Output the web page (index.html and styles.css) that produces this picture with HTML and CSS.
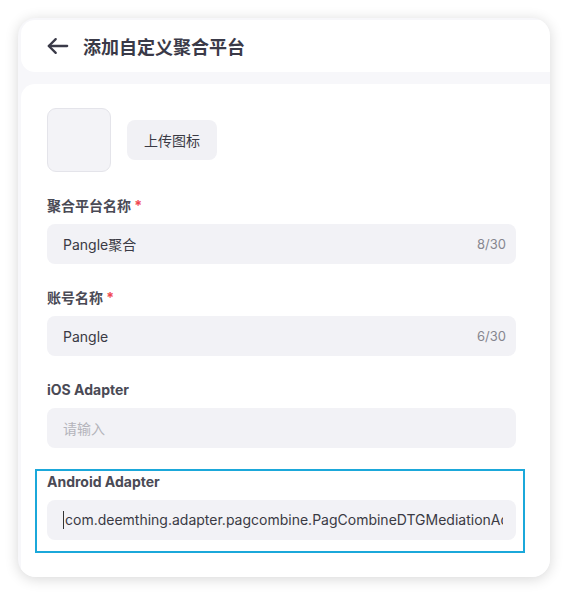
FILE: index.html
```html
<!DOCTYPE html>
<html lang="zh-CN">
<head>
    <meta charset="UTF-8">
    <meta name="viewport" content="width=device-width, initial-scale=1.0">
    <title>添加自定义聚合平台</title>
    <link rel="stylesheet" href="styles.css">
</head>
<body>
    <div class="card">
        <!-- Header -->
        <div class="header">
            <svg class="back" width="22" height="22" viewBox="0 0 24 24" fill="none" stroke="#3a3a48" stroke-width="2.5" stroke-linecap="round" stroke-linejoin="round">
                <path d="M22 12H2"/>
                <path d="M9.5 4.5L2 12l7.5 7.5"/>
            </svg>
            <h1>添加自定义聚合平台</h1>
        </div>

        <!-- Form -->
        <div class="form">
            <div class="upload-row">
                <div class="icon-box"></div>
                <button class="upload-btn">上传图标</button>
            </div>

            <div class="field">
                <label>聚合平台名称 <span class="req">*</span></label>
                <div class="input">
                    <span class="value">Pangle聚合</span>
                    <span class="count">8/30</span>
                </div>
            </div>

            <div class="field">
                <label>账号名称 <span class="req">*</span></label>
                <div class="input">
                    <span class="value">Pangle</span>
                    <span class="count">6/30</span>
                </div>
            </div>

            <div class="field">
                <label>iOS Adapter</label>
                <div class="input">
                    <span class="placeholder">请输入</span>
                </div>
            </div>

            <div class="field focused">
                <label>Android Adapter</label>
                <div class="input">
                    <span class="value clip"><span class="caret"></span>com.deemthing.adapter.pagcombine.PagCombineDTGMediationAdapter</span>
                </div>
            </div>
        </div>
    </div>
</body>
</html>
```

FILE: styles.css
```css
/* General Styles */
body {
    font-family: Inter, "Noto Sans CJK SC", sans-serif;
    margin: 0;
    padding: 18px;
    background: #fff;
    color: #3a3a44;
}

.card {
    width: 532px;
    height: 559px;
    background: #f7f7fa;
    border-radius: 18px;
    overflow: hidden;
    box-shadow: 0 2px 14px rgba(0, 0, 0, 0.16);
    display: flex;
    flex-direction: column;
}

.header {
    height: 52px;
    margin: 2px 0 0 3px;
    padding-left: 26px;
    background: #fff;
    border-radius: 14px 0 0 14px;
    display: flex;
    align-items: center;
}

.back {
    margin-right: 14px;
}

h1 {
    margin: 0;
    font-size: 18px;
    font-weight: 700;
    color: #3a3a48;
}

.form {
    flex: 1;
    margin: 12px 0 0 3px;
    padding: 24px 34px 24px 26px;
    background: #fff;
    border-radius: 14px 0 0 0;
    display: flex;
    flex-direction: column;
    gap: 24px;
}

.upload-row {
    display: flex;
    align-items: center;
    gap: 16px;
}

.icon-box {
    width: 62px;
    height: 62px;
    background: #f3f3f7;
    border: 1px solid #e4e4ea;
    border-radius: 9px;
}

.upload-btn {
    height: 40px;
    padding: 0 17px;
    font-family: inherit;
    font-size: 14px;
    color: #3a3a44;
    background: #f1f1f5;
    border: none;
    border-radius: 8px;
}

.field label {
    display: block;
    height: 20px;
    line-height: 20px;
    margin-bottom: 8px;
    font-size: 14px;
    font-weight: 700;
    color: #4a4a55;
}

.req {
    color: #f0474f;
}

.input {
    height: 40px;
    padding: 0 10px 0 16px;
    background: #f2f2f6;
    border-radius: 8px;
    display: flex;
    align-items: center;
    font-size: 14px;
}

.value {
    flex: 1;
    color: #3a3a44;
}

.value.clip {
    white-space: nowrap;
    overflow: hidden;
    margin-right: 3px;
}

.caret {
    display: inline-block;
    width: 1px;
    height: 18px;
    margin-right: 1px;
    vertical-align: -4px;
    background: #333;
}

.placeholder {
    color: #b4b4bb;
}

.count {
    font-size: 13px;
    color: #86868f;
}

.field.focused {
    margin: -3px -9px 0 -12px;
    padding: 1px 7px 11px 10px;
    border: 2px solid #1ba8da;
}
```
